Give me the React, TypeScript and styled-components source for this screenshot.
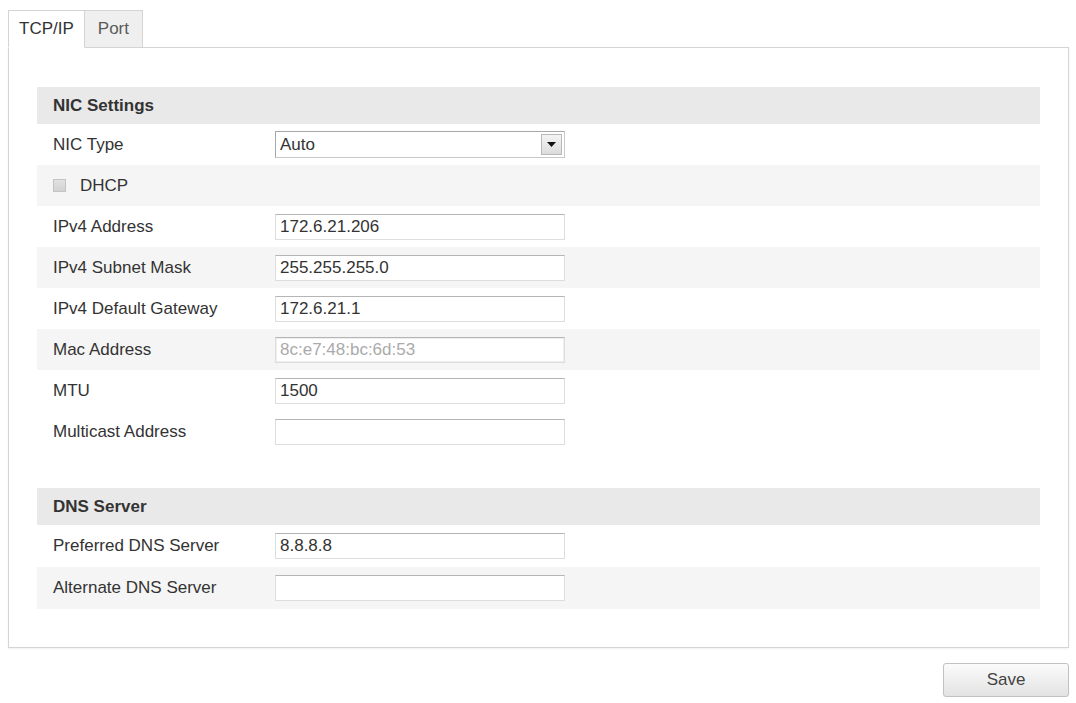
import React from 'react';
import styled, { createGlobalStyle } from 'styled-components';

const GlobalStyle = createGlobalStyle`
  body {
    margin: 0;
    background: #ffffff;
    font-family: 'Liberation Sans', Arial, sans-serif;
    color: #333333;
  }
`;

const Page = styled.div`
  width: 1076px;
  padding: 10px 7px 0 8px;
  box-sizing: border-box;
`;

const TabBar = styled.div`
  display: flex;
  align-items: flex-end;
  height: 37px;
`;

const Tab = styled.div<{ active?: boolean }>`
  display: flex;
  align-items: center;
  justify-content: center;
  box-sizing: border-box;
  height: 38px;
  padding: 0 ${(p) => (p.active ? '10px' : '13px')};
  font-size: 17px;
  color: ${(p) => (p.active ? '#333' : '#5a5a5a')};
  background: ${(p) => (p.active ? '#fff' : '#efefef')};
  border: 1px solid #d4d4d4;
  border-bottom: 1px solid ${(p) => (p.active ? '#fff' : '#d4d4d4')};
  border-left: ${(p) => (p.active ? '1px solid #d4d4d4' : 'none')};
  margin-bottom: -1px;
  position: relative;
  z-index: ${(p) => (p.active ? 1 : 0)};
`;

const Panel = styled.div`
  border: 1px solid #d4d4d4;
  padding: 39px 28px 38px 28px;
  box-shadow: 0 1px 2px rgba(0, 0, 0, 0.06);
`;

const Section = styled.div`
  & + & {
    margin-top: 36px;
  }
`;

const SectionHeader = styled.div`
  display: flex;
  align-items: center;
  height: 37px;
  padding-left: 16px;
  background: #e9e9e9;
  font-size: 17px;
  font-weight: bold;
  color: #333;
`;

const Row = styled.div<{ shaded?: boolean; tall?: boolean }>`
  display: flex;
  align-items: center;
  height: ${(p) => (p.tall ? '42px' : '41px')};
  padding-left: 16px;
  background: ${(p) => (p.shaded ? '#f5f5f5' : 'transparent')};
`;

const Label = styled.div`
  width: 222px;
  font-size: 17px;
  color: #333;
`;

const TextInput = styled.div<{ disabled?: boolean }>`
  display: flex;
  align-items: center;
  box-sizing: border-box;
  width: 290px;
  height: 26px;
  padding: 0 4px;
  font-size: 17px;
  background: #fff;
  color: ${(p) => (p.disabled ? '#aaa' : '#333')};
  border: 1px solid #dddddd;
  border-top-color: #b5b5b5;
  box-shadow: ${(p) => (p.disabled ? 'inset 0 0 0 1px #eee' : 'none')};
`;

const Select = styled.div`
  display: flex;
  align-items: center;
  justify-content: space-between;
  box-sizing: border-box;
  width: 290px;
  height: 27px;
  padding: 0 2px 0 4px;
  font-size: 17px;
  background: #fff;
  color: #333;
  border: 1px solid #a8a8a8;
  border-right-color: #c8c8c8;
  border-bottom-color: #c8c8c8;
`;

const DropButton = styled.div`
  display: flex;
  align-items: center;
  justify-content: center;
  width: 21px;
  height: 21px;
  box-sizing: border-box;
  border: 1px solid #b9b9b9;
  background: linear-gradient(#f4f4f4, #dcdcdc);
`;

const CheckLabel = styled.label`
  display: flex;
  align-items: center;
  gap: 14px;
  font-size: 17px;
  color: #333;
`;

const CheckBox = styled.span`
  display: inline-block;
  width: 13px;
  height: 13px;
  box-sizing: border-box;
  border: 1px solid #c4c4c4;
  background: linear-gradient(#e2e2e2, #d2d2d2);
`;

const Footer = styled.div`
  display: flex;
  justify-content: flex-end;
  margin-top: 15px;
`;

const SaveButton = styled.button`
  width: 126px;
  height: 34px;
  font-family: 'Liberation Sans', Arial, sans-serif;
  font-size: 17px;
  color: #444;
  background: linear-gradient(#fbfbfb, #e3e3e3);
  border: 1px solid #c2c2c2;
  border-radius: 3px;
  box-shadow: 0 1px 1px rgba(0, 0, 0, 0.08);
`;

type Field = { label: string; value?: string; disabled?: boolean; shaded?: boolean };

const nicFields: Field[] = [
  { label: 'IPv4 Address', value: '172.6.21.206' },
  { label: 'IPv4 Subnet Mask', value: '255.255.255.0', shaded: true },
  { label: 'IPv4 Default Gateway', value: '172.6.21.1' },
  { label: 'Mac Address', value: '8c:e7:48:bc:6d:53', disabled: true, shaded: true },
  { label: 'MTU', value: '1500' },
  { label: 'Multicast Address', value: '' },
];

const dnsFields: Field[] = [
  { label: 'Preferred DNS Server', value: '8.8.8.8' },
  { label: 'Alternate DNS Server', value: '', shaded: true },
];

const FieldRow: React.FC<{ field: Field; tall?: boolean }> = ({ field, tall }) => (
  <Row shaded={field.shaded} tall={tall}>
    <Label>{field.label}</Label>
    <TextInput disabled={field.disabled}>{field.value}</TextInput>
  </Row>
);

export default function App() {
  return (
    <>
      <GlobalStyle />
      <Page>
        <TabBar>
          <Tab active>TCP/IP</Tab>
          <Tab>Port</Tab>
        </TabBar>
        <Panel>
          <Section>
            <SectionHeader>NIC Settings</SectionHeader>
            <Row>
              <Label>NIC Type</Label>
              <Select>
                <span>Auto</span>
                <DropButton>
                  <svg width="9" height="5" viewBox="0 0 9 5">
                    <path d="M0 0 L9 0 L4.5 5 Z" fill="#111" />
                  </svg>
                </DropButton>
              </Select>
            </Row>
            <Row shaded>
              <CheckLabel>
                <CheckBox />
                DHCP
              </CheckLabel>
            </Row>
            {nicFields.map((f) => (
              <FieldRow key={f.label} field={f} />
            ))}
          </Section>
          <Section>
            <SectionHeader>DNS Server</SectionHeader>
            {dnsFields.map((f) => (
              <FieldRow key={f.label} field={f} tall />
            ))}
          </Section>
        </Panel>
        <Footer>
          <SaveButton>Save</SaveButton>
        </Footer>
      </Page>
    </>
  );
}
